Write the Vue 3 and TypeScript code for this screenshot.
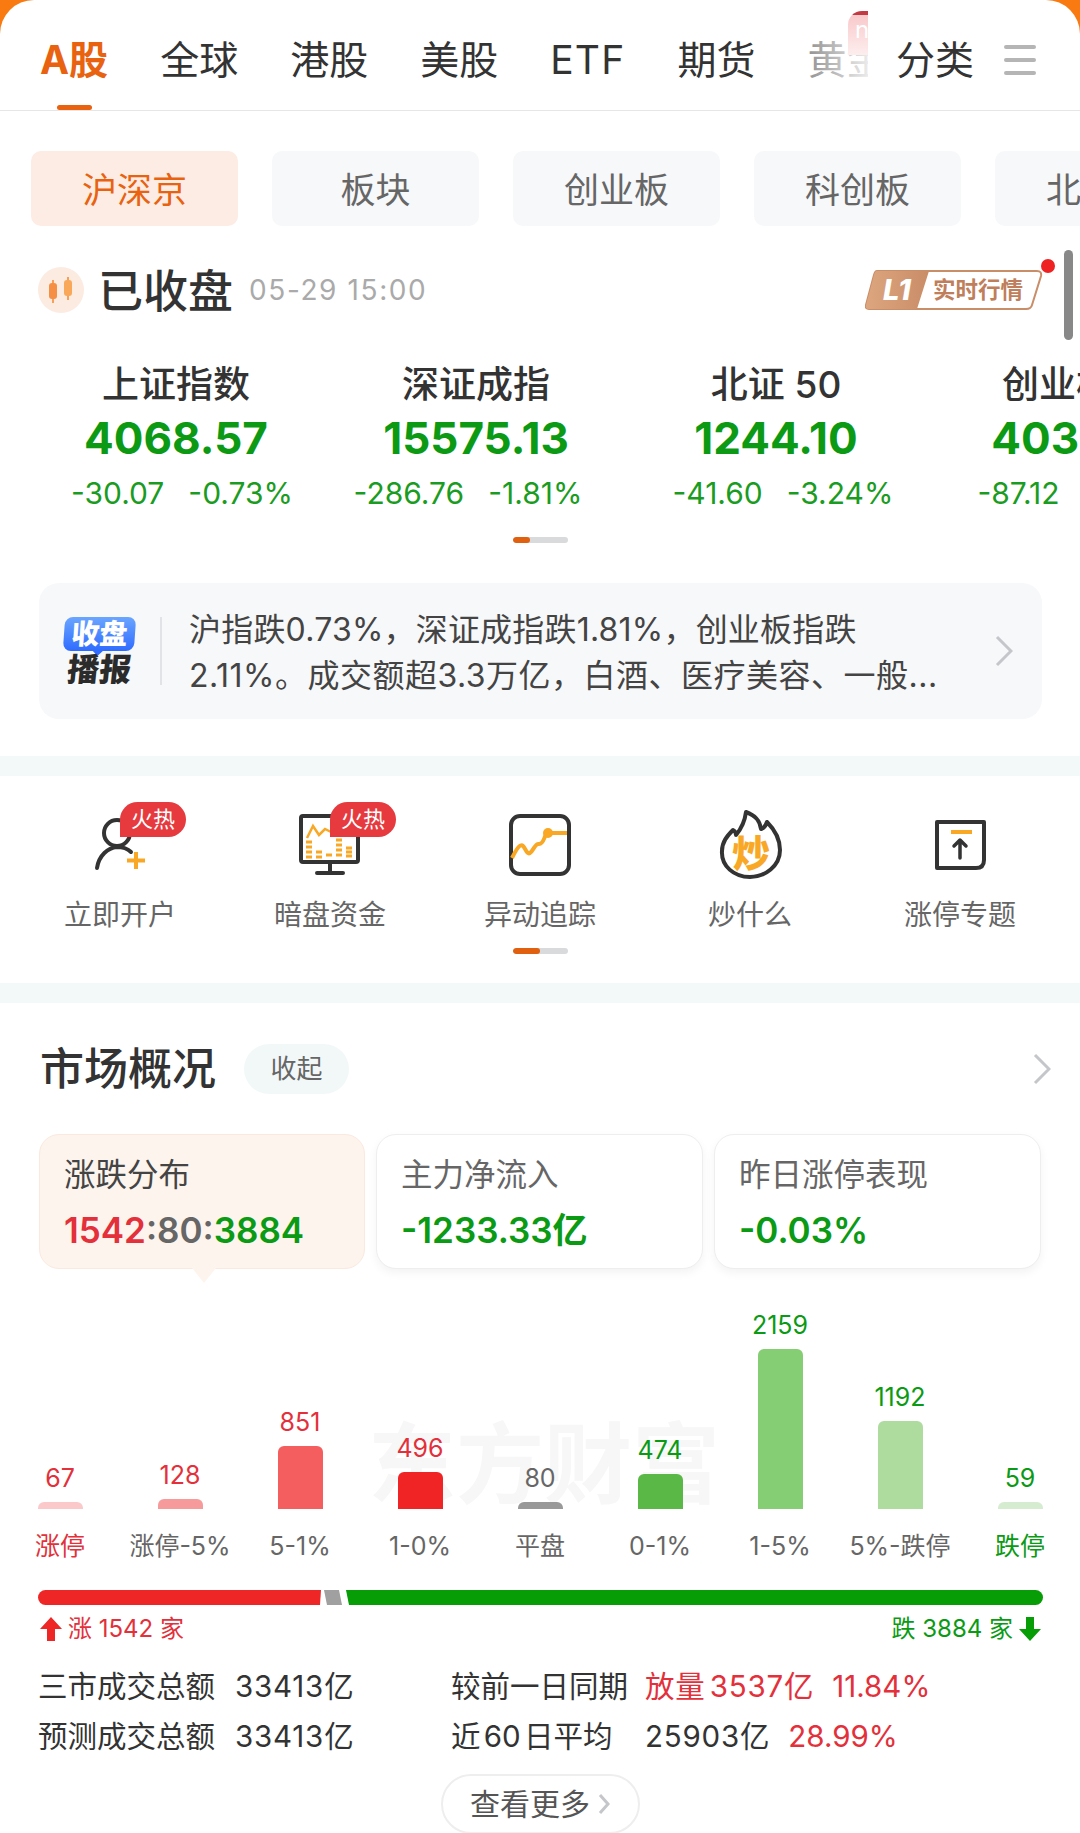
<template>
  <div class="page">
    <div class="sheet">
      <div class="top-nav">
        <div class="tab-strip">
          <span
            v-for="(tab, i) in tabs"
            :key="tab"
            class="tab"
            :class="{ active: i === 0, latin: tab === 'ETF' }"
          >{{ tab }}</span>
          <div class="strip-fade"></div>
          <div class="new-flag">n</div>
        </div>
        <span class="tab cat-tab">分类</span>
        <div class="menu-icon"><i></i><i></i><i></i></div>
      </div>

      <div class="chips">
        <div v-for="(chip, i) in chips" :key="chip" class="chip" :class="{ active: i === 0 }">{{ chip }}</div>
      </div>

      <div class="status-row">
        <svg class="candle" width="46" height="46" viewBox="0 0 46 46">
          <circle cx="23" cy="23" r="23" fill="#fcebe1" />
          <path d="M15 13v3M15 32v4M30 10v3M30 29v4" stroke="#f6a05c" stroke-width="2" />
          <rect x="11" y="16" width="8" height="16" rx="3" fill="#f58f45" />
          <rect x="26" y="13" width="8" height="16" rx="3" fill="#f9a85a" />
        </svg>
        <span class="closed-text">已收盘</span>
        <span class="closed-time">05-29 15:00</span>
        <div class="l1-badge">
          <svg width="178" height="40" viewBox="0 0 178 40">
            <defs>
              <linearGradient id="l1g" x1="0" x2="1" y1="0" y2="0">
                <stop offset="0" stop-color="#dda67f" />
                <stop offset="1" stop-color="#c98d68" />
              </linearGradient>
            </defs>
            <path d="M12 1H172Q177 1 176 6L167 35Q166 39 161 39H4Q0 39 1 35L9 5Q10 1 12 1Z" fill="#fff" stroke="#c98d68" stroke-width="2" />
            <path d="M12 1H64L52 39H4Q0 39 1 35L9 5Q10 1 12 1Z" fill="url(#l1g)" />
            <text x="18" y="30" class="l1-text">L1</text>
            <text x="68" y="28" class="l1-sub">实时行情</text>
          </svg>
          <i class="red-dot"></i>
        </div>
      </div>

      <div class="scroll-thumb"></div>

      <div class="index-row">
        <div v-for="item in indexes" :key="item.name" class="index-item">
          <div class="index-name">{{ item.name }}</div>
          <div class="index-value">{{ item.value }}</div>
          <div class="index-change" :style="{ transform: `translateX(${item.shift}px)` }">
            <span>{{ item.change }}</span>
            <span>{{ item.percent }}</span>
          </div>
        </div>
      </div>

      <div class="pager pager-short"><i></i></div>

      <div class="report-card">
        <div class="report-logo">
          <div class="logo-bubble">收盘</div>
          <div class="logo-bottom">播报</div>
        </div>
        <div class="report-text">
          <div>沪指跌0.73%，深证成指跌1.81%，创业板指跌</div>
          <div class="report-second">2.11%。成交额超3.3万亿，白酒、医疗美容、一般...</div>
        </div>
        <svg class="chevron report-chevron" width="18" height="32" viewBox="0 0 18 32">
          <path d="M2 2l14 14L2 30" />
        </svg>
      </div>

      <div class="band band-one"></div>

      <div class="shortcut-row">
        <div class="shortcut">
          <div class="shortcut-icon">
            <svg width="80" height="80" viewBox="0 0 80 80">
              <circle cx="37" cy="33" r="13" class="ink" />
              <path d="M17 68C19 55 28 48 37 47C42 47 47 48 51 52" class="ink" />
              <path d="M56 52v17M47 60.500h18" class="amber" />
            </svg>
            <span class="hot-tag">火热</span>
          </div>
          <div class="shortcut-name">立即开户</div>
        </div>
        <div class="shortcut">
          <div class="shortcut-icon">
            <svg width="80" height="80" viewBox="0 0 80 80">
              <rect x="11" y="16" width="57" height="46" rx="2" class="ink" />
              <path d="M40 62v10M27 73h26" class="ink" />
              <path d="M17 38l6-12 6 9 6-6 6 3" class="amber thin" />
              <path d="M16 42h6M16 47h6M16 52h6M16 57h6M26 52h6M26 57h6M36 55h6M46 40h6M46 45h6M46 50h6M46 55h6M56 48h6M56 52h6M56 56h6" class="amber bars" />
            </svg>
            <span class="hot-tag">火热</span>
          </div>
          <div class="shortcut-name">暗盘资金</div>
        </div>
        <div class="shortcut">
          <div class="shortcut-icon">
            <svg width="80" height="80" viewBox="0 0 80 80">
              <rect x="11" y="16" width="58" height="58" rx="9" class="ink" />
              <path d="M12 58C16 50 20 43 23 46C26 49 27 55 30 53C34 50 35 43 39 44C44 44 44 36 47 33H67" class="amber" />
              <circle cx="48" cy="33" r="5" fill="#f9a825" />
            </svg>
          </div>
          <div class="shortcut-name">异动追踪</div>
        </div>
        <div class="shortcut">
          <div class="shortcut-icon">
            <svg width="80" height="80" viewBox="0 0 80 80">
              <path d="M36 12C47 16 50 22 51 29C54 28 56 25 57 22C65 30 70 39 70 50C70 66 55 77 40 77C24 77 11 66 12 51C12 42 17 36 23 30C25 31 26 33 26 35C31 29 35 20 36 12Z" class="ink" />
              <text x="41" y="67" class="flame-text">炒</text>
            </svg>
          </div>
          <div class="shortcut-name">炒什么</div>
        </div>
        <div class="shortcut">
          <div class="shortcut-icon">
            <svg width="80" height="80" viewBox="0 0 80 80">
              <path d="M17 22H64V60Q64 68 56 68H17Z" class="ink" />
              <path d="M31 32h21" class="amber" />
              <path d="M40 58V41M34 46l6-6 6 6" class="ink thin-ink" />
            </svg>
          </div>
          <div class="shortcut-name">涨停专题</div>
        </div>
      </div>

      <div class="pager pager-long"><i></i></div>

      <div class="band band-two"></div>

      <div class="market-head">
        <span class="market-title">市场概况</span>
        <span class="fold-btn">收起</span>
        <svg class="chevron market-chevron" width="18" height="32" viewBox="0 0 18 32">
          <path d="M2 2l14 14L2 30" />
        </svg>
      </div>

      <div class="tab-cards">
        <div class="tab-card active">
          <div class="card-label">涨跌分布</div>
          <div class="card-value">
            <span class="red">1542</span><span class="gray">:80:</span><span class="green">3884</span>
          </div>
        </div>
        <div class="tab-card">
          <div class="card-label">主力净流入</div>
          <div class="card-value green">-1233.33亿</div>
        </div>
        <div class="tab-card">
          <div class="card-label">昨日涨停表现</div>
          <div class="card-value green">-0.03%</div>
        </div>
      </div>

      <div class="chart">
        <div class="watermark">东方财富</div>
        <div v-for="bar in bars" :key="bar.label" class="bar-col">
          <div class="bar-value" :class="bar.tone">{{ bar.count }}</div>
          <div class="bar" :style="{ height: bar.height + 'px', background: bar.color }"></div>
        </div>
      </div>
      <div class="bar-labels">
        <div v-for="bar in bars" :key="bar.label" class="bar-label" :class="bar.labelTone">{{ bar.label }}</div>
      </div>

      <div class="ratio-bar">
        <div class="ratio-red"></div>
        <div class="ratio-gray"></div>
        <div class="ratio-green"></div>
      </div>

      <div class="ratio-text">
        <div class="ratio-side red">
          <svg width="22" height="24" viewBox="0 0 22 24"><path d="M11 0L22 12H15V24H7V12H0Z" fill="#ef2626" /></svg>
          <span>涨 1542 家</span>
        </div>
        <div class="ratio-side green">
          <span>跌 3884 家</span>
          <svg width="22" height="24" viewBox="0 0 22 24"><path d="M11 24L22 12H15V0H7V12H0Z" fill="#069d06" /></svg>
        </div>
      </div>

      <div class="stats">
        <span>三市成交总额</span>
        <span class="num">33413亿</span>
        <span>较前一日同期</span>
        <span class="red"><span class="num tight">放量 3537亿</span><span class="stat-pct">11.84%</span></span>
        <span>预测成交总额</span>
        <span class="num">33413亿</span>
        <span class="tight">近 60 日平均</span>
        <span><span class="num">25903亿</span><span class="stat-pct red">28.99%</span></span>
      </div>

      <div class="more-wrap">
        <div class="more-btn">
          <span class="more-text">查看更多</span>
          <svg class="chevron" width="12" height="24" viewBox="0 0 12 24"><path d="M2 3l8 9-8 9" /></svg>
        </div>
      </div>
    </div>
  </div>
</template>

<script setup lang="ts">
interface IndexItem {
  name: string
  value: string
  change: string
  percent: string
  shift: number
}

interface BarItem {
  count: number
  label: string
  height: number
  color: string
  tone: string
  labelTone: string
}

const tabs: string[] = ['A股', '全球', '港股', '美股', 'ETF', '期货', '黄金']
const chips: string[] = ['沪深京', '板块', '创业板', '科创板', '北交所']

const indexes: IndexItem[] = [
  { name: '上证指数', value: '4068.57', change: '-30.07', percent: '-0.73%', shift: 6 },
  { name: '深证成指', value: '15575.13', change: '-286.76', percent: '-1.81%', shift: -8 },
  { name: '北证 50', value: '1244.10', change: '-41.60', percent: '-3.24%', shift: 7 },
  { name: '创业板指', value: '4037.21', change: '-87.12', percent: '-2.11%', shift: 0 }
]

const bars: BarItem[] = [
  { count: 67, label: '涨停', height: 7, color: '#fcc9cb', tone: 'red', labelTone: 'red' },
  { count: 128, label: '涨停-5%', height: 10, color: '#f79a9c', tone: 'red', labelTone: '' },
  { count: 851, label: '5-1%', height: 63, color: '#f55e5e', tone: 'red', labelTone: '' },
  { count: 496, label: '1-0%', height: 37, color: '#f02424', tone: 'red', labelTone: '' },
  { count: 80, label: '平盘', height: 7, color: '#999999', tone: 'gray', labelTone: '' },
  { count: 474, label: '0-1%', height: 35, color: '#5ab946', tone: 'green', labelTone: '' },
  { count: 2159, label: '1-5%', height: 160, color: '#85ce73', tone: 'green', labelTone: '' },
  { count: 1192, label: '5%-跌停', height: 88, color: '#aedc9f', tone: 'green', labelTone: '' },
  { count: 59, label: '跌停', height: 7, color: '#d5ecd0', tone: 'green', labelTone: 'green' }
]
</script>

<style>
body {
  margin: 0;
  background: #fff;
}
</style>

<style scoped>
.page {
  width: 1080px;
  height: 1833px;
  overflow: hidden;
  background: #fa7a12;
  font-family: Inter, "Noto Sans CJK SC", sans-serif;
  color: #333;
}

.sheet {
  position: relative;
  height: 1833px;
  background: #fff;
  border-radius: 34px 34px 0 0;
  overflow: hidden;
}

.top-nav {
  display: flex;
  align-items: flex-start;
  height: 110px;
  border-bottom: 1px solid #e6e6e6;
}

.tab-strip {
  position: relative;
  display: flex;
  flex: 0 0 828px;
  min-width: 0;
  gap: 52px;
  height: 74px;
  padding: 36px 0 0 40px;
  white-space: nowrap;
  clip-path: inset(0 0 -40px 0);
}

.tab {
  flex: none;
  position: relative;
  font-size: 39px;
  line-height: 48px;
  color: #333;
}

.tab.latin {
  letter-spacing: 1.200px;
}

.tab.active {
  color: #e8620f;
  font-weight: 700;
}

.tab.active::after {
  content: "";
  position: absolute;
  left: 17px;
  top: 69px;
  width: 35px;
  height: 5px;
  border-radius: 3px;
  background: #e8620f;
}

.strip-fade {
  position: absolute;
  top: 0;
  right: 0;
  width: 70px;
  height: 100px;
  background: linear-gradient(90deg, rgba(255, 255, 255, 0.4), rgba(255, 255, 255, 0.9));
}

.new-flag {
  position: absolute;
  top: 11px;
  right: 0;
  width: 20px;
  height: 44px;
  padding-left: 7px;
  box-sizing: border-box;
  overflow: hidden;
  border-top-left-radius: 14px;
  background: linear-gradient(#c23a44 0 4px, #f9c9cb 4px, #fdeeee);
  color: #fff;
  font-size: 24px;
  line-height: 38px;
}

.cat-tab {
  margin-left: 28px;
  margin-top: 36px;
}

.menu-icon {
  display: flex;
  flex-direction: column;
  gap: 9px;
  width: 32px;
  margin: 45px 0 0 30px;
}

.menu-icon i {
  height: 4px;
  border-radius: 2px;
  background: #b5b5b5;
}

.chips {
  display: flex;
  gap: 34px;
  margin-top: 40px;
  padding-left: 31px;
  white-space: nowrap;
}

.chip {
  flex: 0 0 207px;
  height: 75px;
  border-radius: 10px;
  background: #f7f8fa;
  color: #666;
  font-size: 35px;
  line-height: 79px;
  text-align: center;
}

.chip.active {
  background: #fdece4;
  color: #e8620f;
}

.status-row {
  display: flex;
  align-items: center;
  height: 46px;
  margin-top: 41px;
  padding-left: 38px;
}

.closed-text {
  margin: -3px 0 0 14px;
  font-size: 45px;
  font-weight: 500;
}

.closed-time {
  margin-left: 16px;
  font-size: 28px;
  letter-spacing: 1.600px;
  color: #aaa;
}

.l1-badge {
  position: relative;
  margin-left: auto;
  margin-right: 37px;
  height: 40px;
}

.l1-text {
  font-size: 29px;
  font-weight: 800;
  font-style: italic;
  fill: #fff;
}

.l1-sub {
  font-size: 22.500px;
  font-weight: 700;
  fill: #c07f5c;
}

.red-dot {
  position: absolute;
  top: -11px;
  right: -12px;
  width: 14px;
  height: 14px;
  border-radius: 50%;
  background: #ee2222;
}

.scroll-thumb {
  position: absolute;
  left: 1064px;
  top: 250px;
  width: 9px;
  height: 90px;
  border-radius: 5px;
  background: #888;
}

.index-row {
  display: flex;
  margin-top: 50px;
  padding-left: 26px;
  overflow: hidden;
}

.index-item {
  flex: 0 0 300px;
  text-align: center;
  white-space: nowrap;
}

.index-name {
  font-size: 37px;
  line-height: 44px;
  font-weight: 500;
}

.index-value {
  margin-top: 6px;
  font-size: 44px;
  line-height: 50px;
  font-weight: 700;
  color: #0c9a14;
}

.index-change {
  display: flex;
  justify-content: center;
  gap: 24px;
  margin-top: 12px;
  font-size: 30px;
  line-height: 36px;
  color: #1a9c22;
}

.pager {
  width: 55px;
  height: 6px;
  margin-left: 513px;
  border-radius: 3px;
  background: #d8dadc;
  overflow: hidden;
}

.pager i {
  display: block;
  height: 100%;
  border-radius: 3px;
  background: #e0600f;
}

.pager-short {
  margin-top: 26px;
}

.pager-short i {
  width: 17px;
}

.pager-long {
  margin-top: 13px;
}

.pager-long i {
  width: 27px;
}

.report-card {
  display: flex;
  align-items: center;
  height: 136px;
  margin: 40px 38px 0 39px;
  border-radius: 20px;
  background: #f7f8fa;
}

.report-logo {
  flex: 0 0 123px;
  box-sizing: border-box;
  height: 68px;
  padding-left: 25px;
  border-right: 2px solid #e2e3e6;
}

.logo-bubble {
  position: relative;
  width: 71px;
  height: 34px;
  border-radius: 8px;
  background: linear-gradient(#6aa5ff, #2f6cff);
  color: #fff;
  font-size: 28px;
  font-weight: 900;
  line-height: 34px;
  text-align: center;
  transform: skewX(-4deg);
}

.logo-bubble::after {
  content: "";
  position: absolute;
  left: 30px;
  bottom: -5px;
  border: 5px solid transparent;
  border-bottom: 0;
  border-top-color: #2f6cff;
}

.logo-bottom {
  margin-top: 4px;
  width: 71px;
  color: #2b2b2b;
  font-size: 32px;
  font-weight: 900;
  line-height: 30px;
  text-align: center;
  transform: skewX(-6deg);
}

.report-text {
  margin-left: 27px;
  padding-top: 3px;
  flex: 1;
  font-size: 32px;
  letter-spacing: 0.200px;
  line-height: 46px;
  color: #444;
  white-space: nowrap;
}

.report-second {
  letter-spacing: 0.500px;
}

.chevron {
  fill: none;
  stroke: #c4c6ca;
  stroke-width: 3;
}

.report-chevron {
  margin-right: 29px;
}

.band {
  height: 20px;
  background: #f3f8f8;
}

.band-one {
  margin-top: 37px;
}

.band-two {
  margin-top: 29px;
}

.shortcut-row {
  display: grid;
  grid-template-columns: repeat(5, 210px);
  padding: 24px 0 0 15px;
}

.shortcut {
  text-align: center;
}

.shortcut-icon {
  position: relative;
  width: 80px;
  height: 80px;
  margin: 0 auto;
}

.shortcut-icon svg {
  display: block;
}

.ink {
  fill: none;
  stroke: #333;
  stroke-width: 4;
  stroke-linecap: round;
  stroke-linejoin: round;
}

.thin-ink {
  stroke-width: 3.500px;
}

.amber {
  fill: none;
  stroke: #f9a825;
  stroke-width: 4;
}

.amber.thin {
  stroke-width: 2.500px;
}

.amber.bars {
  stroke-width: 3;
}

.flame-text {
  font-size: 38px;
  font-weight: 900;
  text-anchor: middle;
  fill: #f9a825;
}

.hot-tag {
  position: absolute;
  left: 40px;
  top: 2px;
  width: 66px;
  height: 35px;
  border-radius: 18px 18px 18px 0;
  background: #e63a3f;
  color: #fff;
  font-size: 22px;
  line-height: 35px;
  text-align: center;
}

.shortcut-name {
  margin-top: 15px;
  font-size: 28px;
  line-height: 40px;
  color: #666;
}

.market-head {
  display: flex;
  align-items: center;
  height: 60px;
  margin-top: 36px;
  padding-left: 40px;
}

.market-title {
  margin-bottom: 7px;
  font-size: 44px;
  font-weight: 500;
}

.fold-btn {
  width: 105px;
  height: 50px;
  margin-left: 28px;
  border-radius: 25px;
  background: #f2f8f8;
  color: #666;
  font-size: 26px;
  line-height: 50px;
  text-align: center;
}

.market-chevron {
  margin-left: auto;
  margin-right: 29px;
}

.tab-cards {
  display: grid;
  grid-template-columns: 326px 327px 327px;
  gap: 11px;
  margin-top: 35px;
  padding-left: 39px;
}

.tab-card {
  box-sizing: border-box;
  height: 135px;
  padding: 20px 0 0 24px;
  border: 1px solid #eeeeee;
  border-radius: 20px;
  box-shadow: 0 4px 10px rgba(0, 0, 0, 0.05);
  background: #fff;
}

.tab-card.active {
  position: relative;
  border-color: #fbe9df;
  background: #fdf4ee;
  box-shadow: none;
}

.tab-card.active::after {
  content: "";
  position: absolute;
  left: 152px;
  bottom: -15px;
  border: 12px solid transparent;
  border-bottom: 0;
  border-top: 15px solid #fdf4ee;
}

.card-label {
  font-size: 31.500px;
  line-height: 40px;
  color: #666;
}

.tab-card.active .card-label {
  color: #444;
}

.card-value {
  margin-top: 15px;
  font-size: 35px;
  line-height: 40px;
  font-weight: 600;
}

.red {
  color: #e3303a;
}

.green {
  color: #0a9a14;
}

.gray {
  color: #666;
}

.chart {
  position: relative;
  display: grid;
  grid-template-columns: repeat(9, 120px);
  align-items: end;
  height: 226px;
  margin-top: 14px;
}

.watermark {
  position: absolute;
  left: 368px;
  bottom: 0;
  color: #f7f7f7;
  font-size: 88px;
  font-weight: 700;
  line-height: 90px;
  white-space: nowrap;
}

.bar-col {
  position: relative;
  display: flex;
  flex-direction: column;
  align-items: center;
}

.bar-value {
  margin-bottom: 9px;
  font-size: 25px;
  line-height: 30px;
}

.bar {
  width: 45px;
  border-radius: 6px 6px 0 0;
}

.bar-labels {
  display: grid;
  grid-template-columns: repeat(9, 120px);
  margin-top: 19px;
}

.bar-label {
  font-size: 25px;
  line-height: 36px;
  text-align: center;
  color: #666;
  white-space: nowrap;
}

.bar-label.red {
  color: #e3303a;
}

.bar-label.green {
  color: #0a9a14;
}

.ratio-bar {
  display: flex;
  height: 15px;
  margin: 26px 37px 0 38px;
  border-radius: 8px;
  overflow: hidden;
}

.ratio-red {
  flex: 0 0 283px;
  background: #ef2626;
  clip-path: polygon(0 0, 100% 0, 282px 100%, 0 100%);
}

.ratio-gray {
  flex: 0 0 18px;
  margin-left: 3px;
  background: #a0a0a0;
  clip-path: polygon(0 0, 15px 0, 100% 100%, 3px 100%);
}

.ratio-green {
  flex: 1;
  margin-left: 4px;
  background: #069d06;
  clip-path: polygon(0 0, 100% 0, 100% 100%, 3px 100%);
}

.ratio-text {
  display: flex;
  justify-content: space-between;
  height: 30px;
  margin: 9px 39px 0 40px;
}

.ratio-side {
  display: flex;
  align-items: center;
  gap: 6px;
  font-size: 24px;
  line-height: 30px;
}

.stats {
  display: grid;
  grid-template-columns: 197px 216px 194px 1fr;
  grid-auto-rows: 50px;
  margin-top: 17px;
  padding-left: 38px;
  font-size: 29.500px;
  line-height: 50px;
  color: #333;
  white-space: nowrap;
}

.stats .num {
  letter-spacing: 0.800px;
}

.stats .tight {
  word-spacing: -5px;
}

.stat-pct {
  margin-left: 18px;
}

.more-wrap {
  display: flex;
  justify-content: center;
  margin: 13px 0 0 1px;
}

.more-btn {
  display: flex;
  align-items: center;
  gap: 8px;
  box-sizing: border-box;
  width: 199px;
  height: 60px;
  padding-left: 27px;
  border: 2px solid #eeeeee;
  border-radius: 30px;
  color: #555;
  font-size: 30px;
}

.more-text {
  margin-top: -5px;
}
</style>
